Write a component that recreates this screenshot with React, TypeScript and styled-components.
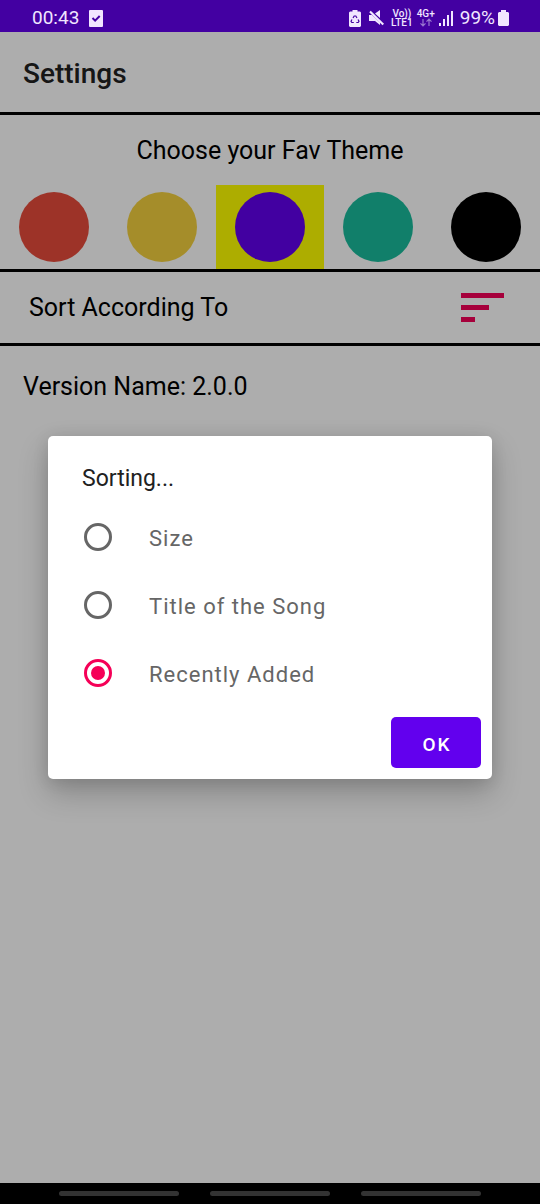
import React, { useState } from "react";
import styled, { createGlobalStyle } from "styled-components";

const GlobalStyle = createGlobalStyle`
  * { box-sizing: border-box; }
  body { margin: 0; background: #fff; font-family: Roboto, sans-serif; }
  button { font-family: inherit; border: 0; padding: 0; cursor: pointer; }
  h1, h2, p { margin: 0; font-weight: 400; }
`;

const Screen = styled.div`
  position: relative;
  display: flex;
  flex-direction: column;
  min-height: 100vh;
`;

const StatusBar = styled.header`
  display: flex;
  align-items: center;
  justify-content: space-between;
  height: 32px;
  padding: 4px 31px 0 32px;
  background: #4300a2;
  color: #f1e6ff;
  font-size: 19px;
  line-height: 24px;
`;

const StatusGroup = styled.div<{ $gap: number }>`
  display: flex;
  align-items: center;
  gap: ${(p) => p.$gap}px;
`;

const Network = styled.div`
  display: flex;
  flex-direction: column;
  align-items: center;
  font-size: 10px;
  font-weight: 500;
  line-height: 9px;
`;

const Content = styled.main`
  position: relative;
  display: flex;
  flex: 1;
  flex-direction: column;
  background: #fff;
`;

const AppBar = styled.div`
  display: flex;
  align-items: center;
  height: 83px;
  padding: 4px 23px 0;
  border-bottom: 3px solid #000;
`;

const AppTitle = styled.h1`
  && { font-weight: 500; }
  font-size: 28px;
  line-height: 36px;
  color: #212121;
`;

const ThemeSection = styled.section`
  border-bottom: 3px solid #000;
`;

const SectionTitle = styled.h2`
  padding: 20px 0 18px;
  font-size: 25px;
  line-height: 32px;
  text-align: center;
`;

const Swatches = styled.div`
  display: grid;
  grid-template-columns: repeat(5, 1fr);
`;

const Swatch = styled.button<{ $color: string; $selected: boolean }>`
  display: flex;
  justify-content: center;
  padding: 7px 0;
  background: ${(p) => (p.$selected ? "#ff0" : "transparent")};

  &::before {
    content: "";
    width: 70px;
    height: 70px;
    border-radius: 50%;
    background: ${(p) => p.$color};
  }
`;

const SortRow = styled.section`
  display: flex;
  align-items: center;
  justify-content: space-between;
  height: 74px;
  padding: 0 36px 0 29px;
  border-bottom: 3px solid #000;
`;

const BodyText = styled.p`
  font-size: 25px;
  line-height: 32px;
`;

const Version = styled(BodyText)`
  padding: 25px 23px;
`;

const IconButton = styled.button`
  display: flex;
  background: none;
  color: #f50057;
`;

const Scrim = styled.div`
  position: absolute;
  inset: 0;
  display: flex;
  align-items: center;
  justify-content: center;
  padding: 0 48px;
  background: rgba(0, 0, 0, 0.32);
`;

const Dialog = styled.form`
  width: 100%;
  padding: 27px 11px 11px 0;
  border-radius: 5px;
  background: #fff;
  box-shadow: 0 14px 30px rgba(0, 0, 0, 0.22), 0 2px 16px rgba(0, 0, 0, 0.1);
`;

const DialogTitle = styled.h2`
  padding-left: 34px;
  margin-bottom: 8px;
  font-size: 23px;
  line-height: 32px;
  color: #212121;
`;

const Option = styled.label`
  display: flex;
  align-items: center;
  gap: 37px;
  height: 68px;
  padding-left: 36px;
  font-size: 22px;
  line-height: 28px;
  letter-spacing: 1px;
  color: #666;
`;

const OptionText = styled.span`
  padding-top: 3px;
`;

const Radio = styled.input`
  display: grid;
  place-items: center;
  width: 28px;
  height: 28px;
  margin: 0;
  border: 3px solid #666;
  border-radius: 50%;
  appearance: none;

  &:checked { border-color: #f50057; }

  &:checked::before {
    content: "";
    width: 14px;
    height: 14px;
    border-radius: 50%;
    background: #f50057;
  }
`;

const Actions = styled.div`
  display: flex;
  justify-content: flex-end;
  padding-top: 10px;
`;

const OkButton = styled.button`
  width: 90px;
  height: 51px;
  padding: 3px 0 0 2px;
  border-radius: 5px;
  background: #6200ee;
  color: #fff;
  font-size: 19px;
  font-weight: 500;
  letter-spacing: 2px;
`;

const NavBar = styled.footer`
  display: flex;
  justify-content: center;
  gap: 31px;
  height: 21px;
  padding-top: 8px;
  background: #000;
`;

const NavHandle = styled.span`
  width: 120px;
  height: 5px;
  border-radius: 3px;
  background: #333;
`;

const TaskIcon = () => (
  <svg width="14" height="17" viewBox="0 0 14 17">
    <rect width="14" height="17" rx="1" fill="currentColor" />
    <path d="M3.5 8l2.6 2.6L10.7 6" fill="none" stroke="#4300a2" strokeWidth="2" />
  </svg>
);

const BatterySaverIcon = () => (
  <svg width="12" height="17" viewBox="0 0 12 17">
    <path d="M3.5 0h5v1.5H11l1 1V16l-1 1H1l-1-1V2.500l1-1h2.500z" fill="currentColor" />
    <path d="M4 8L5.200 6h1.600L8 8M9 9.500l1 1.700-.8 1.300H7.300M4.800 12.500H2.800L2 11.200l1-1.700" fill="none" stroke="#4300a2" strokeWidth="1.200" />
  </svg>
);

const MuteIcon = () => (
  <svg width="15" height="16" viewBox="0 0 15 16">
    <path d="M0 5h3l8 7.500V15L6 11H0zM6 3.500L11 0v8z" fill="currentColor" />
    <path d="M1 1.500l13.300 13" stroke="currentColor" strokeWidth="2.200" />
  </svg>
);

const DataArrows = () => (
  <svg width="12" height="9" viewBox="0 0 12 9" fill="none" stroke="#9a78d0" strokeWidth="1.200">
    <path d="M3 1v7M.5 5.300L3 7.800l2.500-2.500M9 8V1M6.500 3.700L9 1.200l2.500 2.500" />
  </svg>
);

const SignalIcon = () => (
  <svg width="14" height="15" viewBox="0 0 14 15" fill="currentColor">
    <path d="M0 12h2v3H0zM4 8h2v7H4zM8 4h2v11H8zM12 0h2v15h-2z" />
  </svg>
);

const BatteryIcon = () => (
  <svg width="11" height="16" viewBox="0 0 11 16">
    <path d="M3 0h5v2h2l1 1v12l-1 1H1l-1-1V3l1-1h2z" fill="currentColor" />
  </svg>
);

const SortIcon = () => (
  <svg width="43" height="29" viewBox="0 0 43 29" fill="currentColor">
    <path d="M0 0h43v5H0zM0 12h28v5H0zM0 24h14v5H0z" />
  </svg>
);

const themes = [
  { name: "Red", color: "#e74c3c" },
  { name: "Yellow", color: "#f4d03f" },
  { name: "Purple", color: "#6200ee" },
  { name: "Green", color: "#1abc9c" },
  { name: "Black", color: "#000" },
];

const sortOptions = ["Size", "Title of the Song", "Recently Added"];

export default function App() {
  const [theme, setTheme] = useState("Purple");
  const [sort, setSort] = useState("Recently Added");
  const [open, setOpen] = useState(true);

  return (
    <Screen>
      <GlobalStyle />
      <StatusBar>
        <StatusGroup $gap={10}>
          <span>00:43</span>
          <TaskIcon />
        </StatusGroup>
        <StatusGroup $gap={7}>
          <StatusGroup $gap={8}>
            <BatterySaverIcon />
            <MuteIcon />
          </StatusGroup>
          <StatusGroup $gap={4}>
            <Network>
              <span>Vo))</span>
              <span>LTE1</span>
            </Network>
            <Network>
              <span>4G+</span>
              <DataArrows />
            </Network>
            <SignalIcon />
          </StatusGroup>
          <StatusGroup $gap={3}>
            <span>99%</span>
            <BatteryIcon />
          </StatusGroup>
        </StatusGroup>
      </StatusBar>
      <Content>
        <AppBar>
          <AppTitle>Settings</AppTitle>
        </AppBar>
        <ThemeSection>
          <SectionTitle>Choose your Fav Theme</SectionTitle>
          <Swatches>
            {themes.map((t) => (
              <Swatch
                key={t.name}
                type="button"
                aria-label={t.name}
                aria-pressed={t.name === theme}
                $color={t.color}
                $selected={t.name === theme}
                onClick={() => setTheme(t.name)}
              />
            ))}
          </Swatches>
        </ThemeSection>
        <SortRow>
          <BodyText>Sort According To</BodyText>
          <IconButton type="button" aria-label="Sort" onClick={() => setOpen(true)}>
            <SortIcon />
          </IconButton>
        </SortRow>
        <Version>Version Name: 2.0.0</Version>
        {open && (
          <Scrim>
            <Dialog
              role="dialog"
              aria-labelledby="sorting-title"
              onSubmit={(e: React.FormEvent) => {
                e.preventDefault();
                setOpen(false);
              }}
            >
              <DialogTitle id="sorting-title">Sorting...</DialogTitle>
              {sortOptions.map((option) => (
                <Option key={option}>
                  <Radio
                    type="radio"
                    name="sort"
                    checked={option === sort}
                    onChange={() => setSort(option)}
                  />
                  <OptionText>{option}</OptionText>
                </Option>
              ))}
              <Actions>
                <OkButton type="submit">OK</OkButton>
              </Actions>
            </Dialog>
          </Scrim>
        )}
      </Content>
      <NavBar>
        <NavHandle />
        <NavHandle />
        <NavHandle />
      </NavBar>
    </Screen>
  );
}
